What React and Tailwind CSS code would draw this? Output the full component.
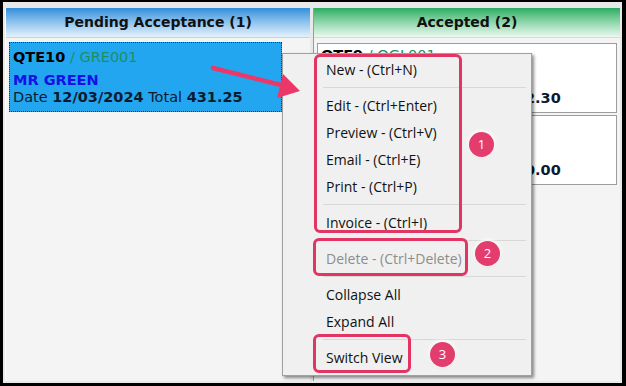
import React from "react";

const items = [
  { t: "New - (Ctrl+N)" },
  { sep: true },
  { t: "Edit - (Ctrl+Enter)" },
  { t: "Preview - (Ctrl+V)" },
  { t: "Email - (Ctrl+E)" },
  { t: "Print - (Ctrl+P)" },
  { sep: true },
  { t: "Invoice - (Ctrl+I)" },
  { sep: true },
  { t: "Delete - (Ctrl+Delete)", disabled: true },
  { sep: true },
  { t: "Collapse All" },
  { t: "Expand All" },
  { sep: true },
  { t: "Switch View" },
];

function Badge({ n, className }) {
  return (
    <div
      className={`absolute w-[25px] h-[25px] rounded-full bg-[#e23d6c] text-white flex items-center justify-center text-[13px] shadow-[0_0_3px_2px_rgba(255,255,255,0.9),0_1px_3px_rgba(0,0,0,0.35)] ${className}`}
      style={{ fontFamily: '"Open Sans", sans-serif' }}
    >
      {n}
    </div>
  );
}

function Card({ code, cust, name, date, total, selected }) {
  return (
    <div
      className={`h-[70px] px-[3px] text-[14.5px] leading-[17px] whitespace-nowrap overflow-hidden ${
        selected
          ? "pt-[6px] bg-[#21a6ef] border border-dotted border-[#0b3a78]"
          : "pt-[3px] bg-white border border-[#9c9c9c]"
      }`}
    >
      <div>
        <span className="font-bold text-black">{code}</span>
        <span className="text-[#1f8f62]"> / {cust}</span>
      </div>
      <div className={`${selected ? "mt-[6px]" : "mt-[9px]"} font-bold text-[#1410e6]`}>{name}</div>
      <div className="text-[#0c1a30]">
        Date <span className="font-bold">{date}</span> Total{" "}
        <span className="font-bold">{total}</span>
      </div>
    </div>
  );
}

export default function App() {
  return (
    <div className="w-[626px] h-[386px] bg-black pt-[2px] pl-[3px] pr-[4px] pb-[3px] overflow-hidden">
      <div
        className="relative w-full h-full bg-[#e9e9e9] flex gap-[3px] p-[2px] pt-[6px]"
        style={{ fontFamily: 'Tahoma, "DejaVu Sans", sans-serif' }}
      >
        {/* Pending column */}
        <div className="w-[305px] flex flex-col gap-[4px] bg-[#f4f4f4] border-l border-white">
          <div className="h-[30px] flex items-center justify-center bg-gradient-to-b from-[#2f8fda] via-[#8fc4ee] to-[#e4f1fb] border-b border-[#bcd6ea] text-[14px] font-bold text-[#111]">
            Pending Acceptance (1)
          </div>
          <div className="pl-[3px] w-[276px]">
            <Card selected code="QTE10" cust="GRE001" name="MR GREEN" date="12/03/2024" total="431.25" />
          </div>
        </div>

        {/* Accepted column */}
        <div className="flex-1 flex flex-col bg-[#f4f4f4] border-l border-[#9a9a9a]">
          <div className="h-[30px] flex items-center justify-center bg-gradient-to-b from-[#22ac62] via-[#8fd7ac] to-[#eaf8f0] border-b border-[#c4e6d0] text-[14px] font-bold text-[#111]">
            Accepted (2)
          </div>
          <div className="flex flex-col gap-[2px] mt-[5px] mx-[3px]">
            <Card code="QTE9" cust="OGL001" name="MR OGLE" date="05/03/2024" total="1432.30" />
            <Card code="QTE8" cust="BRO001" name="MR BROWN" date="01/03/2024" total="1250.00" />
          </div>
        </div>

        {/* Context menu */}
        <div
          className="absolute left-[279px] top-[51px] w-[250px] bg-[#f0f0f0] border border-[#a0a0a0] pt-[2px] pb-[4px] shadow-[2px_2px_3px_rgba(0,0,0,0.45)]"
          style={{ fontFamily: '"Open Sans", "Noto Sans", sans-serif' }}
        >
          {items.map((it, i) =>
            it.sep ? (
              <div key={i} className="h-[9px] flex items-center pl-[40px] pr-[5px]">
                <div className="w-full h-px bg-[#d7d7d7]" />
              </div>
            ) : (
              <div
                key={i}
                className={`h-[27px] flex items-center pl-[43px] text-[14px] ${it.disabled ? "text-[#8d8d8d]" : "text-[#111]"}`}
              >
                {it.t}
              </div>
            )
          )}
        </div>

        {/* Highlight boxes */}
        <div className="absolute left-[311px] top-[52px] w-[148px] h-[179px] border-[3px] border-[#e23563] rounded-[6px]" />
        <div className="absolute left-[310px] top-[236px] w-[155px] h-[38px] border-[3px] border-[#e23563] rounded-[6px]" />
        <div className="absolute left-[310px] top-[332px] w-[98px] h-[39px] border-[3px] border-[#e23563] rounded-[6px]" />

        <Badge n="1" className="left-[466px] top-[130px]" />
        <Badge n="2" className="left-[472px] top-[239px]" />
        <Badge n="3" className="left-[427px] top-[340px]" />

        {/* Arrow */}
        <svg className="absolute left-[200px] top-[55px]" width="110" height="45" viewBox="0 0 110 45">
          <line x1="10" y1="11" x2="82" y2="29" stroke="#ec3768" strokeWidth="4.5" strokeLinecap="round" />
          <polygon points="97,34 74,41 80,17" fill="#ec3768" />
        </svg>
      </div>
    </div>
  );
}
